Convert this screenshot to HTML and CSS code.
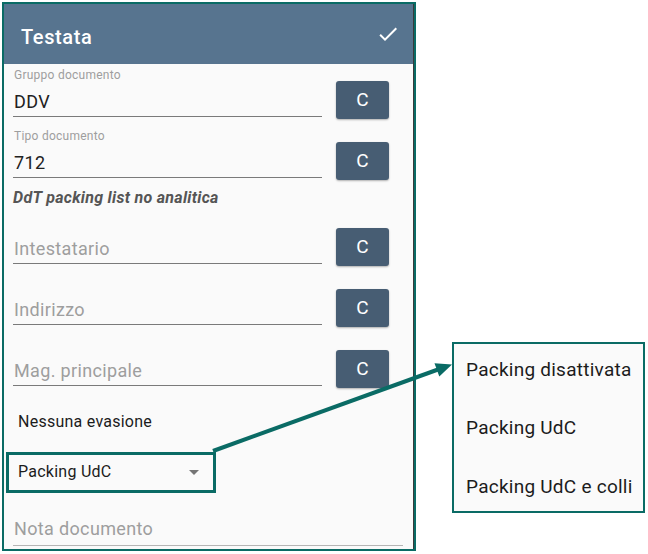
FILE: index.html
```html
<!DOCTYPE html>
<html lang="it">
<head>
<meta charset="utf-8">
<title>Testata</title>
<link rel="stylesheet" href="styles.css">
</head>
<body>
<div class="stage">
  <div class="phone">
    <div class="screen">
      <header class="appbar">
        <h1 class="appbar-title">Testata</h1>
        <svg class="appbar-check" width="24" height="24" viewBox="0 0 24 24"><path d="M9 16.17L4.83 12l-1.42 1.41L9 19 21 7l-1.41-1.41z" fill="#fff"/></svg>
      </header>
      <main class="form">
        <div class="row row-first">
          <div class="field">
            <div class="field-label">Gruppo documento</div>
            <div class="field-value">DDV</div>
          </div>
          <button class="btn-c">C</button>
        </div>
        <div class="row row-second">
          <div class="field">
            <div class="field-label">Tipo documento</div>
            <div class="field-value">712</div>
          </div>
          <button class="btn-c">C</button>
        </div>
        <div class="description">DdT packing list no analitica</div>
        <div class="row row-intest">
          <div class="field">
            <div class="field-value placeholder">Intestatario</div>
          </div>
          <button class="btn-c">C</button>
        </div>
        <div class="row row-next">
          <div class="field">
            <div class="field-value placeholder">Indirizzo</div>
          </div>
          <button class="btn-c">C</button>
        </div>
        <div class="row row-next">
          <div class="field">
            <div class="field-value placeholder">Mag. principale</div>
          </div>
          <button class="btn-c">C</button>
        </div>
        <div class="plain-text">Nessuna evasione</div>
        <div class="dropdown">
          <span class="dropdown-text">Packing UdC</span>
          <span class="dropdown-caret"></span>
        </div>
        <div class="field field-wide">
          <div class="field-value placeholder">Nota documento</div>
        </div>
      </main>
    </div>
  </div>

  <div class="highlight"></div>

  <div class="popup">
    <div class="popup-item">Packing disattivata</div>
    <div class="popup-item">Packing UdC</div>
    <div class="popup-item">Packing UdC e colli</div>
  </div>

  <svg class="arrow" width="648" height="554" viewBox="0 0 648 554">
    <line x1="213" y1="451" x2="438" y2="369.5" stroke="#0a6b65" stroke-width="4"/>
    <polygon points="452,364.5 434.5,363.3 439.3,376.5" fill="#0a6b65"/>
  </svg>
</div>
</body>
</html>
```
FILE: styles.css
```css
* { box-sizing: border-box; }

body {
  margin: 0;
  background: #ffffff;
  font-family: Roboto, "Noto Sans", "Liberation Sans", sans-serif;
  letter-spacing: 0.25px;
}

.stage {
  position: relative;
  width: 648px;
  height: 554px;
  overflow: hidden;
}

.phone {
  margin: 2px 0 0 2px;
  width: 414px;
  height: 549px;
  border: 2px solid #0a6b65;
  background: #fafafa;
  display: flex;
}

.screen {
  flex: 1;
  display: flex;
  flex-direction: column;
  border-right: 1px solid #3a3a3a;
}

.appbar {
  height: 60px;
  flex-shrink: 0;
  background: #57748f;
  display: flex;
  align-items: center;
  justify-content: space-between;
  padding: 0 13px 0 17px;
}

.appbar-title {
  margin: 5px 0 0 0;
  font-size: 20px;
  font-weight: 500;
  color: #ffffff;
  letter-spacing: 0.6px;
}

.appbar-check { display: block; }

.form {
  flex: 1;
  display: flex;
  flex-direction: column;
  padding: 4px 0 0 9px;
}

.row {
  display: flex;
  align-items: flex-end;
}

.row-second { margin-top: 12px; }
.row-intest { margin-top: 20px; }
.row-next { margin-top: 25px; }

.field {
  width: 309px;
  padding-bottom: 2px;
  border-bottom: 1px solid #7a7a7a;
}

.field-label {
  font-size: 12px;
  line-height: 14px;
  color: #9e9e9e;
  margin-bottom: 8px;
  padding-left: 1px;
}

.field-value {
  font-size: 18px;
  line-height: 24px;
  color: #212121;
  padding-left: 1px;
  letter-spacing: 0.35px;
}

.field-value.placeholder { color: #9e9e9e; }

.btn-c {
  width: 53px;
  height: 38px;
  margin-left: 14px;
  margin-bottom: -2px;
  border: none;
  border-radius: 3px;
  background: #475d73;
  color: #ffffff;
  font-family: Roboto, "Noto Sans", sans-serif;
  font-size: 19px;
  line-height: 38px;
  box-shadow: 0 1px 2px rgba(0, 0, 0, 0.3);
  padding: 0;
}

.description {
  margin-top: 10px;
  font-size: 16px;
  line-height: 20px;
  font-weight: 700;
  font-style: italic;
  color: #555555;
  letter-spacing: 0.3px;
}

.plain-text {
  margin-top: 25.5px;
  padding-left: 5px;
  font-size: 16px;
  line-height: 20px;
  color: #1c1c1c;
}

.dropdown {
  margin-top: 30px;
  width: 196px;
  padding: 0 10px 0 5px;
  display: flex;
  align-items: center;
  justify-content: space-between;
  font-size: 16px;
  line-height: 20px;
  color: #1c1c1c;
}

.dropdown-caret {
  width: 0;
  height: 0;
  border-left: 5px solid transparent;
  border-right: 5px solid transparent;
  border-top: 5px solid #757575;
  margin-top: 1px;
}

.field-wide {
  margin-top: 35.5px;
  width: 390px;
  padding-bottom: 4px;
  border-bottom-color: #b5b5b5;
}

.highlight {
  position: absolute;
  left: 6px;
  top: 452px;
  width: 210px;
  height: 41px;
  border: 3px solid #0a6b65;
}

.popup {
  position: absolute;
  left: 452px;
  top: 342px;
  width: 193px;
  height: 171px;
  border: 2px solid #0a6b65;
  background: #fafafa;
  padding: 13.5px 0 0 12px;
  display: flex;
  flex-direction: column;
  gap: 34.5px;
}

.popup-item {
  font-size: 19px;
  line-height: 24px;
  color: #1c1c1c;
  white-space: nowrap;
}

.arrow {
  position: absolute;
  left: 0;
  top: 0;
  pointer-events: none;
}
```
